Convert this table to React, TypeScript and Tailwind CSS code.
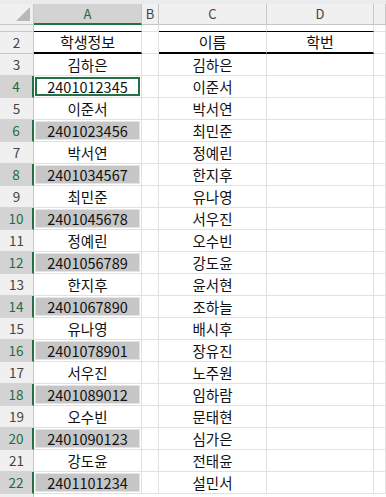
import type { ReactNode } from "react";

const studentIds = [
  "2401012345",
  "2401023456",
  "2401034567",
  "2401045678",
  "2401056789",
  "2401067890",
  "2401078901",
  "2401089012",
  "2401090123",
  "2401101234",
];

const names = [
  "김하은",
  "이준서",
  "박서연",
  "최민준",
  "정예린",
  "한지후",
  "유나영",
  "서우진",
  "오수빈",
  "강도윤",
  "윤서현",
  "조하늘",
  "배시후",
  "장유진",
  "노주원",
  "임하람",
  "문태현",
  "심가은",
  "전태윤",
  "설민서",
];

const font = { fontFamily: '"Noto Sans CJK KR", "Noto Sans", sans-serif' };

function Cell({
  children,
  className = "",
}: {
  children?: ReactNode;
  className?: string;
}) {
  return (
    <div
      className={`flex items-center justify-center border-r border-b border-[#e1e1e1] overflow-hidden ${className}`}
    >
      {children}
    </div>
  );
}

function RowHeader({ n, selected }: { n: number; selected: boolean }) {
  return (
    <div
      className={`h-[22px] flex items-center justify-center border-b border-[#d4d4d4] text-[13.5px] ${
        selected
          ? "bg-[#d3d3d3] text-[#1f6b42] border-r-2 border-r-[#217346]"
          : "bg-[#f0f0f0] text-[#444] border-r border-r-[#c6c6c6]"
      }`}
    >
      {n}
    </div>
  );
}

export default function App() {
  // rows 3..22: column A alternates name / id, column C lists names
  const rows = names.map((name, i) => {
    const rowNum = i + 3;
    const even = rowNum % 2 === 0;
    const aText = even ? studentIds[(rowNum - 4) / 2] : names[(rowNum - 3) / 2];
    return { rowNum, even, aText, cText: name };
  });

  return (
    <div
      className="w-[386px] h-[497px] overflow-hidden bg-white text-[#111]"
      style={font}
    >
      <div className="h-[4px] bg-[#e9ebee]" />
      <div className="grid grid-cols-[34px_108px_17px_108px_107px_1fr]">
        {/* column headers */}
        <div className="h-[21px] bg-[#f0f0f0] border-r border-b border-[#c6c6c6] relative">
          <div className="absolute right-[3px] bottom-[3px] w-0 h-0 border-l-[14px] border-l-transparent border-b-[14px] border-b-[#b8b8b8]" />
        </div>
        <div className="h-[21px] bg-[#d3d3d3] text-[#1f6b42] text-[13px] flex items-center justify-center border-r border-[#c6c6c6] border-b-2 border-b-[#217346]">
          A
        </div>
        {["B", "C", "D", ""].map((l, i) => (
          <div
            key={i}
            className="h-[21px] bg-[#f0f0f0] text-[#444] text-[13px] flex items-center justify-center border-r border-b border-[#c6c6c6]"
          >
            {l}
          </div>
        ))}

        {/* row 1 (almost hidden) */}
        <div className="h-[7px] bg-[#f0f0f0] border-r border-b border-[#c6c6c6]" />
        <Cell className="h-[7px] border-b-black" />
        <Cell className="h-[7px]" />
        <Cell className="h-[7px] border-b-black" />
        <Cell className="h-[7px] border-b-black" />
        <Cell className="h-[7px]" />

        {/* row 2 headings */}
        <div className="h-[22px] bg-[#f0f0f0] border-r border-b border-[#c6c6c6] flex items-center justify-center text-[13.5px] text-[#444]">
          2
        </div>
        <Cell className="h-[22px] border-b-2 border-b-black text-[15px]">학생정보</Cell>
        <Cell className="h-[22px]" />
        <Cell className="h-[22px] border-b-2 border-b-black text-[15px]">이름</Cell>
        <Cell className="h-[22px] border-b-2 border-b-black text-[15px]">학번</Cell>
        <Cell className="h-[22px]" />

        {rows.map((r) => (
          <div key={r.rowNum} className="contents">
            <RowHeader n={r.rowNum} selected={r.even} />
            {r.even ? (
              <Cell className="h-[22px] p-[1px] text-[14.5px]">
                {r.rowNum === 4 ? (
                  <div className="w-full h-full flex items-center justify-center border-2 border-[#217346] bg-white">
                    {r.aText}
                  </div>
                ) : (
                  <div className="w-full h-full flex items-center justify-center border border-[#e4e4e4] bg-[#c6c6c6]">
                    {r.aText}
                  </div>
                )}
              </Cell>
            ) : (
              <Cell className="h-[22px] text-[14.5px]">{r.aText}</Cell>
            )}
            <Cell className="h-[22px]" />
            <Cell className="h-[22px] text-[14.5px]">{r.cText}</Cell>
            <Cell className="h-[22px]" />
            <Cell className="h-[22px]" />
          </div>
        ))}
        <div className="h-[22px] bg-[#f0f0f0] border-r border-[#c6c6c6]" />
      </div>
    </div>
  );
}
